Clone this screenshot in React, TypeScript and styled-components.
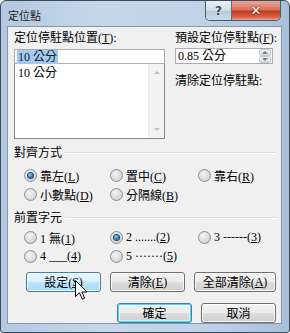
import styled, { createGlobalStyle, css } from "styled-components"

const GlobalStyle = createGlobalStyle`
  html, body {
    margin: 0;
    padding: 0;
    background: #ffffff;
  }
  body {
    font-family: "Liberation Serif", "Noto Sans CJK TC", serif;
    font-size: 12px;
    color: #000;
  }
`

const StyledWindow = styled.div`
  position: relative;
  box-sizing: border-box;
  width: 290px;
  height: 333px;
  display: flex;
  flex-direction: column;
  padding: 0 7px 8px 6px;
  border: 1px solid #3d4b5b;
  border-radius: 6px 6px 3px 3px;
  background: linear-gradient(90deg, #b3c9e1 0%, #c5d7ea 35%, #bfd2e7 70%, #a8c0da 100%);
`

const StyledTitleBar = styled.div`
  height: 29px;
  display: flex;
  align-items: flex-start;
  justify-content: space-between;
`

const StyledTitle = styled.span`
  padding: 7px 0 0 1px;
  font-family: "Noto Sans CJK TC", sans-serif;
  font-size: 11px;
  line-height: 14px;
  color: #1b1b1b;
`

const StyledCaptionGroup = styled.div`
  display: flex;
  height: 19px;
  border: 1px solid #4b5b6e;
  border-top: none;
  border-radius: 0 0 5px 5px;
  overflow: hidden;
  margin-right: 1px;
`

const StyledCaptionButton = styled.div<{ $close?: boolean }>`
  display: flex;
  align-items: center;
  justify-content: center;
  font-family: "DejaVu Sans", sans-serif;
  font-weight: bold;
  ${({ $close }) =>
    $close
      ? css`
          width: 48px;
          background: linear-gradient(180deg, #e9a797 0%, #d8725c 45%, #c4391f 55%, #d8644a 85%, #eba58e 100%);
          color: #fff;
          font-size: 13px;
          text-shadow: 0 0 2px #5a1a10, 0 0 1px #5a1a10;
        `
      : css`
          width: 25px;
          border-right: 1px solid #5d6d80;
          background: linear-gradient(180deg, #e7eef6 0%, #d6e1ec 45%, #bccbdc 55%, #cbd8e6 100%);
          color: #3a4a5c;
          font-size: 12px;
          text-shadow: 0 0 2px #ffffff;
        `}
`

const StyledClient = styled.div`
  flex: 1;
  display: flex;
  flex-direction: column;
  padding: 4px 5px 0 6px;
  border: 1px solid #8797ab;
  background: #f0f0f0;
`

const StyledTopRow = styled.div`
  display: flex;
  gap: 10px;
`

const StyledColumn = styled.div<{ $width: number }>`
  width: ${({ $width }) => $width}px;
  display: flex;
  flex-direction: column;
`

const StyledLabel = styled.div<{ $gap?: number; $top?: number }>`
  height: 14px;
  line-height: 14px;
  white-space: nowrap;
  margin-top: ${({ $top = 0 }) => $top}px;
  margin-bottom: ${({ $gap = 0 }) => $gap}px;
`

const StyledTextBox = styled.div`
  box-sizing: border-box;
  height: 15px;
  padding: 1px 0 0 2px;
  border: 1px solid #abadb3;
  background: #fff;
  line-height: 12px;
`

const StyledSelection = styled.span`
  padding: 0 1px;
  background: #a4c9ee;
  color: #0c1a30;
`

const StyledListBox = styled.div`
  box-sizing: border-box;
  height: 75px;
  display: flex;
  border: 1px solid #828790;
  border-top: none;
  background: #fff;
`

const StyledListItems = styled.div`
  flex: 1;
  padding: 2px 0 0 3px;
  line-height: 14px;
`

const StyledScrollBar = styled.div`
  width: 15px;
  display: flex;
  flex-direction: column;
  justify-content: space-between;
  background: #f3f3f3;
  border-left: 1px solid #ececec;
`

const StyledScrollButton = styled.div`
  height: 17px;
  display: flex;
  align-items: center;
  justify-content: center;
`

const Arrow = styled.div<{ $down?: boolean; $color?: string }>`
  width: 0;
  height: 0;
  border-left: 3px solid transparent;
  border-right: 3px solid transparent;
  ${({ $down, $color = "#bfbfbf" }) =>
    $down
      ? css`border-top: 3px solid ${$color};`
      : css`border-bottom: 3px solid ${$color};`}
`

const StyledSpinBox = styled.div`
  box-sizing: border-box;
  height: 16px;
  display: flex;
  align-items: stretch;
  border: 1px solid #abadb3;
  background: #fff;
`

const StyledSpinText = styled.div`
  flex: 1;
  padding-left: 2px;
  line-height: 14px;
`

const StyledSpinButtons = styled.div`
  width: 12px;
  margin: 0 1px 0 0;
  display: flex;
  flex-direction: column;
`

const StyledSpinHalf = styled.div`
  flex: 1;
  display: flex;
  align-items: center;
  justify-content: center;
  background: linear-gradient(180deg, #f4f4f4, #dcdcdc);
  border: 1px solid #c9c9c9;
  border-radius: 2px;
`

const StyledGroupHeader = styled.div<{ $top: number }>`
  display: flex;
  align-items: center;
  gap: 3px;
  margin-top: ${({ $top }) => $top}px;
`

const StyledRule = styled.div`
  flex: 1;
  height: 0;
  margin-top: 1px;
  border-top: 1px solid #d5dfe5;
  border-bottom: 1px solid #ffffff;
`

const StyledRadioGrid = styled.div<{ $top: number }>`
  display: grid;
  grid-template-columns: 86px 88px 1fr;
  grid-auto-rows: 19px;
  padding-left: 10px;
  margin-top: ${({ $top }) => $top}px;
`

const StyledRadioItem = styled.div`
  display: flex;
  align-items: center;
  gap: 3px;
  white-space: nowrap;
`

const StyledRadioCircle = styled.div<{ $checked?: boolean }>`
  box-sizing: border-box;
  width: 13px;
  height: 13px;
  border-radius: 50%;
  border: 1px solid #8e8f8f;
  display: flex;
  align-items: center;
  justify-content: center;
  background: radial-gradient(circle at 40% 35%, #f4f4f4 0%, #dcdcdc 55%, #c6c6c6 100%);

  &::after {
    content: "";
    display: ${({ $checked }) => ($checked ? "block" : "none")};
    width: 5px;
    height: 5px;
    border-radius: 50%;
    background: radial-gradient(circle at 40% 35%, #8fd0f5 0%, #2b79b1 55%, #123d63 100%);
    box-shadow: 0 0 0 1px #1b4d77;
  }
`

const StyledButtonRow = styled.div<{ $top: number; $end?: boolean }>`
  display: flex;
  gap: 9px;
  margin-top: ${({ $top }) => $top}px;
  padding-left: 12px;
  justify-content: ${({ $end }) => ($end ? "flex-end" : "flex-start")};
`

const StyledButton = styled.div<{ $width?: number; $hover?: boolean; $default?: boolean }>`
  box-sizing: border-box;
  width: ${({ $width = 75 }) => $width}px;
  height: 20px;
  display: flex;
  align-items: center;
  justify-content: center;
  border: 1px solid #707070;
  border-radius: 3px;
  white-space: nowrap;
  background: linear-gradient(180deg, #f2f2f2 0%, #ebebeb 50%, #dddddd 51%, #cfcfcf 100%);
  box-shadow: inset 0 0 0 1px rgba(255, 255, 255, 0.8);
  ${({ $hover }) =>
    $hover &&
    css`
      border-color: #3c7fb1;
      background: linear-gradient(180deg, #eaf6fd 0%, #d9f0fc 50%, #bee6fd 51%, #a7d9f5 100%);
    `}
  ${({ $default }) =>
    $default &&
    css`
      border-color: #3c7fb1;
      box-shadow: inset 0 0 0 1px #48d8fb, inset 0 0 0 2px rgba(255, 255, 255, 0.5);
    `}
`

const StyledCursor = styled.svg`
  position: absolute;
  left: 74px;
  top: 279px;
`

type RadioProps = { label: string; checked?: boolean; accel?: string; prefix?: string }

const Accel = ({ k }: { k: string }) => (
  <>
    (<u>{k}</u>)
  </>
)

const Radio = ({ label, checked, accel }: RadioProps) => (
  <StyledRadioItem>
    <StyledRadioCircle $checked={checked} />
    <span>
      {label}
      {accel && <Accel k={accel} />}
    </span>
  </StyledRadioItem>
)

const alignments: RadioProps[] = [
  { label: "靠左", accel: "L", checked: true },
  { label: "置中", accel: "C" },
  { label: "靠右", accel: "R" },
  { label: "小數點", accel: "D" },
  { label: "分隔線", accel: "B" },
]

const leaders: RadioProps[] = [
  { label: "1 無", accel: "1" },
  { label: "2 .......", accel: "2", checked: true },
  { label: "3 ------", accel: "3" },
  { label: "4 ___", accel: "4" },
  { label: "5 ·······", accel: "5" },
]

const App = () => {
  return (
    <>
      <GlobalStyle />
      <StyledWindow>
        <StyledTitleBar>
          <StyledTitle>定位點</StyledTitle>
          <StyledCaptionGroup>
            <StyledCaptionButton>?</StyledCaptionButton>
            <StyledCaptionButton $close>✕</StyledCaptionButton>
          </StyledCaptionGroup>
        </StyledTitleBar>
        <StyledClient>
          <StyledTopRow>
            <StyledColumn $width={151}>
              <StyledLabel $gap={4}>
                定位停駐點位置<Accel k="T" />:
              </StyledLabel>
              <StyledTextBox>
                <StyledSelection>10 公分</StyledSelection>
              </StyledTextBox>
              <StyledListBox>
                <StyledListItems>10 公分</StyledListItems>
                <StyledScrollBar>
                  <StyledScrollButton>
                    <Arrow />
                  </StyledScrollButton>
                  <StyledScrollButton>
                    <Arrow $down />
                  </StyledScrollButton>
                </StyledScrollBar>
              </StyledListBox>
            </StyledColumn>
            <StyledColumn $width={98}>
              <StyledLabel $gap={3}>
                預設定位停駐點<Accel k="F" />:
              </StyledLabel>
              <StyledSpinBox>
                <StyledSpinText>0.85 公分</StyledSpinText>
                <StyledSpinButtons>
                  <StyledSpinHalf>
                    <Arrow $color="#6d7f94" />
                  </StyledSpinHalf>
                  <StyledSpinHalf>
                    <Arrow $down $color="#6d7f94" />
                  </StyledSpinHalf>
                </StyledSpinButtons>
              </StyledSpinBox>
              <StyledLabel $top={10}>清除定位停駐點:</StyledLabel>
            </StyledColumn>
          </StyledTopRow>

          <StyledGroupHeader $top={4}>
            <span>對齊方式</span>
            <StyledRule />
          </StyledGroupHeader>
          <StyledRadioGrid $top={5}>
            {alignments.map((r) => (
              <Radio key={r.label} {...r} />
            ))}
          </StyledRadioGrid>

          <StyledGroupHeader $top={4}>
            <span>前置字元</span>
            <StyledRule />
          </StyledGroupHeader>
          <StyledRadioGrid $top={2}>
            {leaders.map((r) => (
              <Radio key={r.label} {...r} />
            ))}
          </StyledRadioGrid>

          <StyledButtonRow $top={6}>
            <StyledButton $hover>
              設定<Accel k="S" />
            </StyledButton>
            <StyledButton>
              清除<Accel k="E" />
            </StyledButton>
            <StyledButton $width={82}>
              全部清除<Accel k="A" />
            </StyledButton>
          </StyledButtonRow>
          <StyledButtonRow $top={11} $end>
            <StyledButton $default>確定</StyledButton>
            <StyledButton>取消</StyledButton>
          </StyledButtonRow>
        </StyledClient>
        <StyledCursor width="14" height="21" viewBox="0 0 14 21">
          <path
            d="M0.5 0.5 L0.5 16.5 L4.5 12.8 L7.3 19.2 L9.6 18.2 L6.9 12 L12 12 Z"
            fill="#ffffff"
            stroke="#000000"
            strokeWidth="1"
            strokeLinejoin="round"
          />
        </StyledCursor>
      </StyledWindow>
    </>
  )
}

export default App
